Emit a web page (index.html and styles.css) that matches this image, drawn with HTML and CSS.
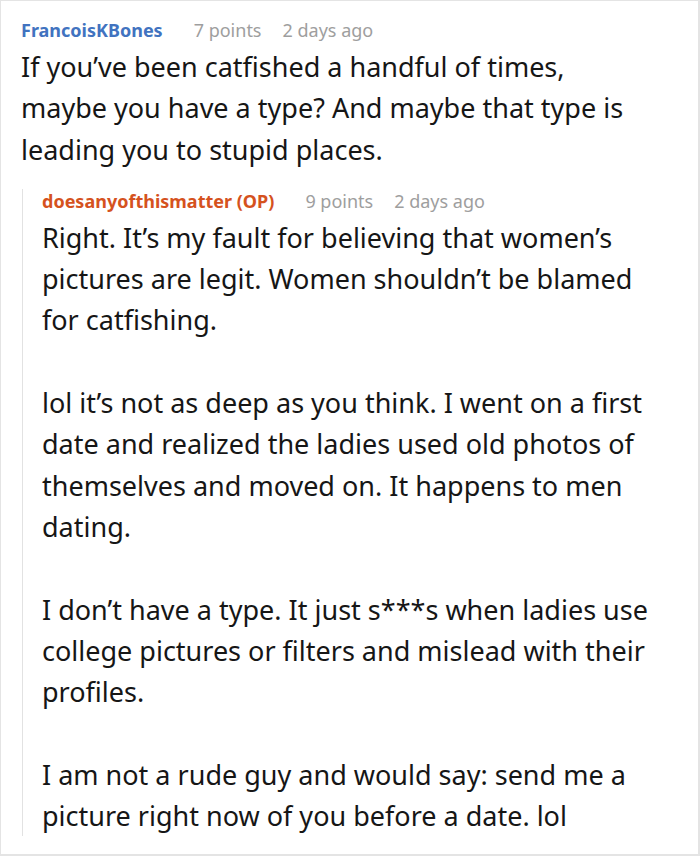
FILE: index.html
```html
<!DOCTYPE html>
<html>
<head>
<meta charset="utf-8">
<link rel="stylesheet" href="styles.css">
</head>
<body>
<div class="frame">
  <div class="comment">
    <div class="meta">
      <span class="user">FrancoisKBones</span>
      <span class="info">7 points</span>
      <span class="info">2 days ago</span>
    </div>
    <p class="text">If you’ve been catfished a handful of times, maybe you have a type? And maybe that type is leading you to stupid places.</p>
    <div class="reply">
      <div class="meta">
        <span class="user op">doesanyofthismatter (OP)</span>
        <span class="info">9 points</span>
        <span class="info">2 days ago</span>
      </div>
      <p class="text">Right. It’s my fault for believing that women’s pictures are legit. Women shouldn’t be blamed for catfishing.</p>
      <p class="text">lol it’s not as deep as you think. I went on a first date and realized the ladies used old photos of themselves and moved on. It happens to men dating.</p>
      <p class="text">I don’t have a type. It just s***s when ladies use college pictures or filters and mislead with their profiles.</p>
      <p class="text">I am not a rude guy and would say: send me a picture right now of you before a date. lol</p>
    </div>
  </div>
</div>
</body>
</html>
```

FILE: styles.css
```css
html, body {
  margin: 0;
  padding: 0;
  background: #ffffff;
}
.frame {
  width: 700px;
  height: 856px;
  box-sizing: border-box;
  border-top: 1px solid #e4e4e4;
  border-left: 1px solid #e4e4e4;
  border-right: 2px solid #e4e4e4;
  border-bottom: 2px solid #e4e4e4;
  overflow: hidden;
  font-family: "Noto Sans", "Open Sans", sans-serif;
  color: #161616;
}
.comment {
  padding: 17px 45px 0 20px;
}
.meta {
  display: flex;
  align-items: baseline;
  font-size: 18px;
  line-height: 24px;
}
.user {
  font-weight: 700;
  color: #4173c0;
  margin-right: 31px;
}
.user.op {
  color: #d5521e;
}
.info {
  color: #9e9e9e;
  margin-right: 21px;
}
.text {
  margin: 0;
  font-size: 27px;
  line-height: 41.3px;
}
.comment > .text {
  margin-top: 4px;
}
.reply {
  margin: 30px 0 0 1px;
  border-left: 1px solid #e2e2e2;
  padding-left: 19px;
}
.reply .meta {
  margin-top: -11px;
}
.reply .text {
  margin-top: 41.3px;
}
.reply .meta + .text {
  margin-top: 4px;
}
```
